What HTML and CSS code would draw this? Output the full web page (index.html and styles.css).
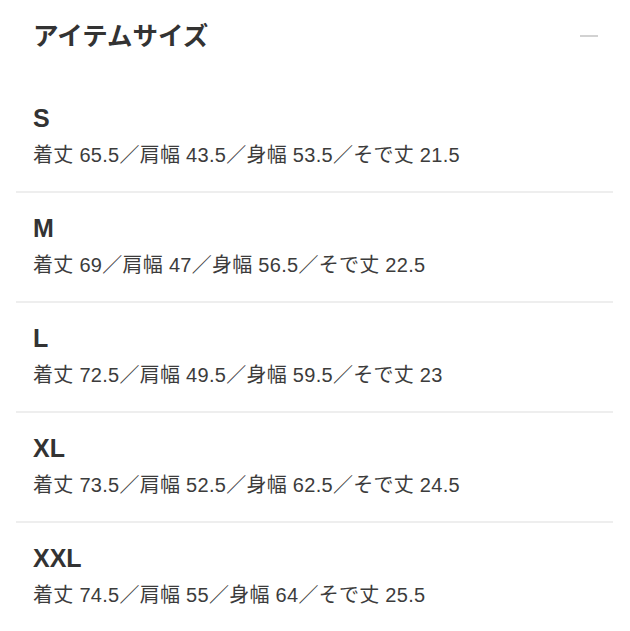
FILE: index.html
```html
<!DOCTYPE html>
<html lang="ja">
<head>
<meta charset="utf-8">
<link rel="stylesheet" href="styles.css">
</head>
<body>
<section class="panel">
  <div class="head">
    <h2 class="title">アイテムサイズ</h2>
    <span class="toggle" aria-label="閉じる"></span>
  </div>
  <ul class="sizes">
    <li class="size">
      <div class="size-name">S</div>
      <div class="size-detail">着丈 65.5／肩幅 43.5／身幅 53.5／そで丈 21.5</div>
    </li>
    <li class="size">
      <div class="size-name">M</div>
      <div class="size-detail">着丈 69／肩幅 47／身幅 56.5／そで丈 22.5</div>
    </li>
    <li class="size">
      <div class="size-name">L</div>
      <div class="size-detail">着丈 72.5／肩幅 49.5／身幅 59.5／そで丈 23</div>
    </li>
    <li class="size">
      <div class="size-name">XL</div>
      <div class="size-detail">着丈 73.5／肩幅 52.5／身幅 62.5／そで丈 24.5</div>
    </li>
    <li class="size">
      <div class="size-name">XXL</div>
      <div class="size-detail">着丈 74.5／肩幅 55／身幅 64／そで丈 25.5</div>
    </li>
  </ul>
</section>
</body>
</html>
```
FILE: styles.css
```css
html, body {
  margin: 0;
  padding: 0;
  background: #fff;
}
body {
  font-family: "Liberation Sans", "Noto Sans CJK JP", sans-serif;
  color: #333;
}
.panel {
  padding: 0 17px 0 16px;
}
.head {
  display: flex;
  justify-content: space-between;
  align-items: center;
  height: 72px;
  margin-bottom: 11px;
  padding: 0 15px 0 17px;
}
.title {
  margin: 0;
  font-size: 25.5px;
  font-weight: 700;
  color: #333;
  line-height: 36px;
}
.toggle {
  display: block;
  width: 18px;
  height: 2px;
  background: #d2d2d2;
}
.sizes {
  list-style: none;
  margin: 0;
  padding: 0;
}
.size {
  padding: 20px 17px 22px;
  border-bottom: 2px solid #eeeeee;
}
.size:last-child {
  border-bottom: none;
}
.size-name {
  font-size: 25px;
  font-weight: 700;
  line-height: 30px;
  color: #333;
}
.size-detail {
  margin-top: 8px;
  font-size: 20px;
  letter-spacing: 0.28px;
  line-height: 28px;
  color: #3c3c3c;
}
```
